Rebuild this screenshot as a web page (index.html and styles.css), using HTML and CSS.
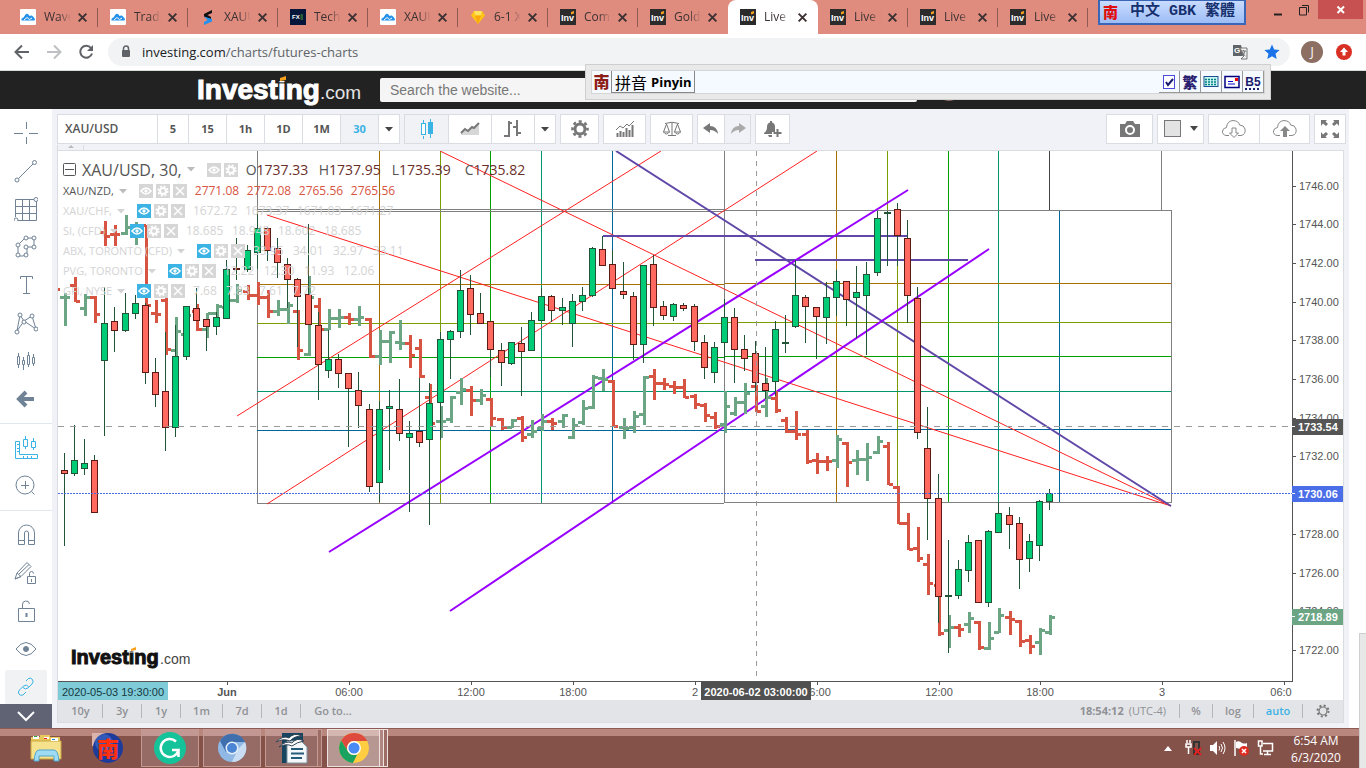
FILE: index.html
```html
<!DOCTYPE html>
<html lang="en">
<head>
<meta charset="utf-8">
<title>Live Futures Charts</title>
<link rel="stylesheet" href="styles.css">
</head>
<body>
<svg class="defs" aria-hidden="true">
  <symbol id="fav-wave" viewBox="0 0 16 16"><rect width="16" height="16" rx="1" fill="#fff"/><path d="M1.500 11.500Q1 9 3.500 8.500L5.500 5.500Q7 3.800 8.500 5.500L9.500 7L11 6.500Q12 6 13 7.500Q15.500 9.500 14.500 11.500Z" fill="#2491eb"/><path d="M4 11L7 8.500L9.500 10.500L12 9" stroke="#fff" fill="none"/></symbol>
  <symbol id="fav-s" viewBox="0 0 16 16"><path d="M12 1v3L7.500 6l3.500 2v3L4 7.500V5Z" fill="#111"/><path d="M4 7.500L12 10v2.500L4 16v-3l3.500-2Z" fill="#2491eb"/></symbol>
  <symbol id="fav-fx" viewBox="0 0 16 16"><rect width="16" height="16" fill="#06163a"/><text x="2" y="10" font-family="Liberation Sans" font-weight="700" font-size="6" fill="#fff">FX</text><path d="M10.500 6H13M10.500 8H13M10.500 10H13" stroke="#4ea52f"/></symbol>
  <symbol id="fav-gem" viewBox="0 0 16 16"><path d="M4 2h8l3 4.500L8 15L1 6.500Z" fill="#ffc414"/><path d="M4 2h8l-1 4.500H5Z" fill="#ffe35c"/><path d="M5 6.500h6L8 15Z" fill="#f9a90c"/></symbol>
  <symbol id="fav-inv" viewBox="0 0 16 16"><rect width="16" height="16" fill="#2b2b2b"/><text x="1" y="12" font-family="Liberation Sans" font-weight="700" font-size="9" fill="#fff">Inv</text><path d="M11 3l3 -1v2.500l-3 1Z" fill="#f7a01b"/></symbol>
  <symbol id="x" viewBox="0 0 10 10"><path d="M1.500 1.500L8.500 8.500M8.500 1.500L1.500 8.500" stroke="#3c3133" stroke-width="1.800"/></symbol>
  <symbol id="eye" viewBox="0 0 14 14"><rect width="14" height="14" fill="var(--bg)"/><path d="M2 7Q7 1 12 7Q7 13 2 7Z" fill="none" stroke="#fff" stroke-width="1.500"/><circle cx="7" cy="7" r="1.700" fill="#fff"/></symbol>
  <symbol id="cog" viewBox="0 0 14 14"><rect width="14" height="14" fill="#d6d6d6"/><circle cx="7" cy="7" r="3" fill="none" stroke="#fff" stroke-width="2"/><circle cx="7" cy="7" r="4.800" fill="none" stroke="#fff" stroke-width="1.500" stroke-dasharray="2 1.770"/></symbol>
  <symbol id="del" viewBox="0 0 14 14"><rect width="14" height="14" fill="#d6d6d6"/><path d="M3 3L11 11M11 3L3 11" stroke="#fff" stroke-width="1.500"/></symbol>
  <symbol id="gear" viewBox="0 0 20 20"><circle cx="10" cy="10" r="5" fill="none" stroke="currentColor" stroke-width="3"/><circle cx="10" cy="10" r="7.500" fill="none" stroke="currentColor" stroke-width="2.600" stroke-dasharray="3 2.890" stroke-dashoffset="1.500"/></symbol>
  <symbol id="caret" viewBox="0 0 8 5"><path d="M0 0H8L4 4.500Z" fill="currentColor"/></symbol>
</svg>

<header class="tabs">
  <nav class="tablist" aria-label="Tabs">
    <div class="tab"><svg class="fav"><use href="#fav-wave"/></svg><span>Wave</span><button aria-label="Close tab"><svg><use href="#x"/></svg></button></div>
    <div class="tab"><svg class="fav"><use href="#fav-wave"/></svg><span>Trade</span><button aria-label="Close tab"><svg><use href="#x"/></svg></button></div>
    <div class="tab"><svg class="fav"><use href="#fav-s"/></svg><span>XAUU</span><button aria-label="Close tab"><svg><use href="#x"/></svg></button></div>
    <div class="tab"><svg class="fav"><use href="#fav-fx"/></svg><span>Tech</span><button aria-label="Close tab"><svg><use href="#x"/></svg></button></div>
    <div class="tab"><svg class="fav"><use href="#fav-wave"/></svg><span>XAUU</span><button aria-label="Close tab"><svg><use href="#x"/></svg></button></div>
    <div class="tab"><svg class="fav"><use href="#fav-gem"/></svg><span>6-1 X</span><button aria-label="Close tab"><svg><use href="#x"/></svg></button></div>
    <div class="tab"><svg class="fav"><use href="#fav-inv"/></svg><span>Com</span><button aria-label="Close tab"><svg><use href="#x"/></svg></button></div>
    <div class="tab plain"><svg class="fav"><use href="#fav-inv"/></svg><span>Gold</span><button aria-label="Close tab"><svg><use href="#x"/></svg></button></div>
    <div class="tab active"><svg class="fav"><use href="#fav-inv"/></svg><span>Live F</span><button aria-label="Close tab"><svg><use href="#x"/></svg></button></div>
    <div class="tab"><svg class="fav"><use href="#fav-inv"/></svg><span>Live F</span><button aria-label="Close tab"><svg><use href="#x"/></svg></button></div>
    <div class="tab"><svg class="fav"><use href="#fav-inv"/></svg><span>Live F</span><button aria-label="Close tab"><svg><use href="#x"/></svg></button></div>
    <div class="tab"><svg class="fav"><use href="#fav-inv"/></svg><span>Live</span><button aria-label="Close tab"><svg><use href="#x"/></svg></button></div>
  </nav>
  <div class="ime-mode"><b class="nan">南</b><span>中文 GBK 繁體</span></div>
  <div class="win">
    <button aria-label="Minimize"><svg width="12" height="12"><path d="M2 10.500H10" stroke="#222" stroke-width="2"/></svg></button>
    <button aria-label="Restore"><svg width="12" height="12"><path d="M1.500 3.500H8.500V11H1.500ZM4 1.500H10.500V8.500" fill="none" stroke="#222"/></svg></button>
    <button class="shut" aria-label="Close window"><svg width="10" height="10"><path d="M1.500 1.500L8 8M8 1.500L1.500 8" stroke="#fff" stroke-width="2"/></svg></button>
  </div>
</header>

<div class="address">
  <button aria-label="Back"><svg width="16" height="16"><path d="M15 8H2M8 1.500L1.500 8L8 14.500" fill="none" stroke="#5f6368" stroke-width="2"/></svg></button>
  <button aria-label="Forward"><svg width="16" height="16"><path d="M1 8H14M8 1.500L14.500 8L8 14.500" fill="none" stroke="#bfc0c3" stroke-width="2"/></svg></button>
  <button aria-label="Reload"><svg width="16" height="16"><path d="M13 4A6 6 0 1 0 14 9.500" fill="none" stroke="#5f6368" stroke-width="2"/><path d="M15 1V7H9Z" fill="#5f6368"/></svg></button>
  <div class="omni">
    <svg width="10" height="14"><path d="M2.500 6V3.500a2.500 2.500 0 0 1 5 0V6" fill="none" stroke="#5f6368" stroke-width="1.500"/><rect x="1" y="5" width="8" height="7" rx="1" fill="#5f6368"/></svg>
    <span class="url"><b>investing.com</b>/charts/futures-charts</span>
    <svg width="16" height="16"><path d="M1 1h8l3 11H1Z" fill="#606468"/><path d="M8 4h7v11H9L12 12Z" fill="#f1f3f4" stroke="#777"/><text x="2" y="9" font-family="Liberation Sans" font-size="8" font-weight="700" fill="#fff">G</text><path d="M9 7h5M11.500 6v1M13 7q-1 4-3 5M10.500 8q1 3 3 4" stroke="#777" fill="none"/></svg>
    <svg width="16" height="16"><path d="M8 .5L10.200 5.500L15.600 6L11.500 9.700L12.700 15L8 12.200L3.300 15L4.500 9.700L.4 6L5.800 5.500Z" fill="#1a73e8"/></svg>
  </div>
  <span class="avatar">J</span>
  <svg class="upd" width="16" height="16"><circle cx="8" cy="8" r="8" fill="#d93025"/><path d="M8 3.500L12 8H9.500V11.500H6.500V8H4Z" fill="#fff"/></svg>
</div>

<div class="site">
  <svg class="brand" viewBox="0 0 168 38" width="168" height="38" role="img" aria-label="Investing.com"><text x="0" y="28" class="heavy" font-size="28" fill="#fff" stroke="#fff">Investing</text><text x="123" y="28" font-size="19" fill="#e4e4e4">.com</text><rect x="81" y="5" width="10" height="5" fill="#222"/><path d="M83 7L89 5V9L83 10Z" fill="#f7a01b"/></svg>
  <input class="search" type="text" aria-label="Search" placeholder="Search the website...">
  <span class="user"></span>
</div>

<div class="pinyin">
  <div class="strip">
    <b class="nan dark">南</b><span class="mode">拼音 <b>Pinyin</b></span>
    <span class="keys">
      <button aria-label="Enabled"><svg width="14" height="16"><rect x="1.500" y="1.500" width="11" height="13" fill="#fff" stroke="#4a4ae0"/><path d="M4 8L6 11L11 5" fill="none" stroke="#1b1b70" stroke-width="2"/></svg></button>
      <button class="fan" aria-label="Traditional">繁</button>
      <button aria-label="Keyboard"><svg width="16" height="14"><rect x="1" y="1.500" width="14" height="10" fill="#c8f4f4" stroke="#1a5090"/><path d="M2 4.500H14M2 7H14M2 9.500H14" stroke="#008080" stroke-width="1.500" stroke-dasharray="2 1"/></svg></button>
      <button aria-label="Mail"><svg width="16" height="14"><rect x="1" y="1.500" width="14" height="11" fill="#fff" stroke="#000080" stroke-width="1.500"/><path d="M4 6.500H9M4 9H11" stroke="#0000d0"/><rect x="11" y="3" width="3" height="3" fill="#f00000"/></svg></button>
      <button class="b5">B5</button>
    </span>
  </div>
</div>

<main class="work">
  <aside class="tools">
    <button aria-label="Cross"><svg viewBox="0 0 24 24"><path d="M0 12.500H9M15 12.500H24M12.500 1V8M12.500 16V23"/></svg></button>
    <button aria-label="Trend line"><svg viewBox="0 0 24 24"><path d="M4.500 19.500L19 5"/><circle cx="3" cy="21" r="2"/><circle cx="20.500" cy="3.500" r="2"/></svg></button>
    <button aria-label="Gann"><svg viewBox="0 0 24 24"><path d="M1.500 2.500H20M1.500 2.500V20M3 23.500H22.500V4M1 9.500H22M1 16.500H22M8.500 2V23M15.500 2V23"/><circle cx="22" cy="2.500" r="2" class="bg"/><circle cx="2" cy="23" r="2" class="bg"/></svg></button>
    <button aria-label="Elliott"><svg viewBox="0 0 24 24"><path d="M4 20V10L11 3H20V12H13V19L9 21H4"/><g class="dots"><circle cx="4" cy="20" r="2"/><circle cx="4" cy="10" r="2"/><circle cx="12" cy="3" r="2"/><circle cx="20" cy="3" r="2"/><circle cx="20" cy="12" r="2"/><circle cx="12" cy="12" r="2"/><circle cx="12" cy="20" r="2"/></g></svg></button>
    <button aria-label="Text"><svg viewBox="0 0 24 24"><path d="M6.500 6V3.500H18.500V6M12.500 3.500V20.500M9 20.500H16"/></svg></button>
    <button aria-label="Patterns"><svg viewBox="0 0 24 24"><path d="M3 20L6 4L10 10L18 5L22 18L10 10Z"/><g class="dots"><circle cx="3" cy="21" r="2"/><circle cx="6" cy="4" r="2"/><circle cx="10" cy="11" r="2"/><circle cx="18" cy="5" r="2"/><circle cx="22" cy="18" r="2"/></g></svg></button>
    <button aria-label="Forecast"><svg viewBox="0 0 24 24"><path d="M4.500 4V7M4.500 16V19M9.500 8V11M9.500 15V21M14.500 3V6M14.500 15V18M19.500 5V8M19.500 14V17"/><path d="M3.500 7.500h2v8h-2ZM8.500 11.500h2v4h-2ZM13.500 6.500h2v9h-2ZM18.500 8.500h2v6h-2Z"/></svg></button>
    <button aria-label="Back"><svg viewBox="0 0 24 24"><path d="M20 12H7M12 5L5 12L12 19" stroke-width="4"/></svg></button>
    <hr>
    <button class="blue" aria-label="Measure"><svg viewBox="0 0 24 24"><path d="M1.500 5.500H5.500V18.500H23.500V22.500H1.500ZM11.500 0V3M11.500 10V13M19.500 2V5M19.500 11V14M9.500 3.500h4v7h-4ZM17.500 5.500h4v6h-4ZM3 8.500H5M3 12.500H5M3 15.500H5M9.500 20V22M13.500 20V22M17.500 20V22"/></svg></button>
    <button aria-label="Zoom"><svg viewBox="0 0 24 24"><circle cx="11" cy="11" r="9"/><path d="M11.500 7V15M7 11.500H15M17.500 17.500L20.500 20.500"/></svg></button>
    <hr>
    <button aria-label="Magnet"><svg viewBox="0 0 24 24"><path d="M4.500 21.500V10A8 8 0 0 1 20.500 10V21.500H14.500V10A2 2 0 0 0 10.500 10V21.500ZM4 17.500H10M14 17.500H20"/></svg></button>
    <button aria-label="Drawing mode"><svg viewBox="0 0 24 24"><path d="M1 18L3 12L13 1.500L17 5.500L7 15.500ZM1 18L7 15.500M3 12L7 15.500M5 13L15 3.500M13.500 15.500h8v7h-8ZM15.500 15V12.500a2 2 0 0 1 4 0M17.500 18v3"/></svg></button>
    <button aria-label="Lock"><svg viewBox="0 0 24 24"><path d="M4.500 9.500H20.500V22.500H4.500ZM8.500 9V6a3.500 3.500 0 0 1 7 -1"/><path d="M12.500 14V18" stroke-width="2"/></svg></button>
    <button aria-label="Hide"><svg viewBox="0 0 24 24"><path d="M2 12Q12 -1 22 12Q12 25 2 12Z"/><circle cx="12" cy="12" r="2.500" class="fill"/></svg></button>
    <button class="blue chosen" aria-label="Link"><svg viewBox="0 0 24 24"><path d="M12 6L14.500 3.500Q17 2.500 18.500 4.500Q20 7 18 9L14 13Q11 15 9 12.500M12 17L9 20Q6 21 5 19Q3.500 17 5.500 15L9.500 11Q12.500 9 14.500 11.500"/></svg></button>
    <button class="more" aria-label="More"><svg width="20" height="12"><path d="M2 2L10 10L18 2" fill="none" stroke="#fff" stroke-width="2"/></svg></button>
  </aside>

  <section class="panel">
    <div class="bar">
      <div class="grp"><button class="sym">XAU/USD</button><button class="w1">5</button><button>15</button><button>1h</button><button>1D</button><button>1M</button><button class="on">30</button><button class="dd" aria-label="Intervals"><svg class="car"><use href="#caret"/></svg></button></div>
      <div class="grp tri"><button class="on" aria-label="Candles"><svg width="14" height="20"><path d="M3.500 1V4M3.500 17V20M10.500 0V19" stroke="#3bb3e4"/><rect x="1.500" y="4.500" width="4" height="11" fill="#fff" stroke="#3bb3e4"/><rect x="8" y="3" width="5" height="12" fill="#3bb3e4"/></svg></button><button aria-label="Area"><svg width="20" height="16"><path d="M1 12L5 8L8 10L12 6L14 7L19 2V14H1Z" fill="#d7d7d7"/><path d="M1 12L5 8L8 10L12 6L14 7L19 2" fill="none" stroke="#777" stroke-width="2"/></svg></button><button aria-label="Bars"><svg width="18" height="20"><path d="M5 2V18M0 17H5M5 4H8M13 1V17M9 8H13M13 14H17" stroke="#777" stroke-width="2"/></svg></button><button class="dd" aria-label="Styles"><svg class="car"><use href="#caret"/></svg></button></div>
      <div class="grp"><button class="w2" aria-label="Settings"><svg width="20" height="20"><use href="#gear"/></svg></button></div>
      <div class="grp ic"><button aria-label="Indicators"><svg width="20" height="18"><path d="M2.500 13V17M5.500 11V17M8.500 12V17M11.500 8V17M14.500 10V17M17.500 5V17" stroke="#777" stroke-width="2"/><path d="M1 10L5 6L8 8L12 4L14 6L19 1" fill="none" stroke="#777"/></svg></button></div>
      <div class="grp ic"><button aria-label="Compare"><svg width="20" height="18"><path d="M10 2V15M6 15.500H14M3 3.500Q10 1 17 3.500M4.500 4L1.500 12H7.500ZM15.500 4L12.500 12H18.500ZM1.500 12Q4.500 16 7.500 12M12.500 12Q15.500 16 18.500 12" fill="none" stroke="#777"/></svg></button></div>
      <div class="grp"><button class="w3" aria-label="Undo"><svg width="16" height="12"><path d="M0 5L7 0V3Q14 3 15 11Q12 7 7 7V10Z" fill="#777"/></svg></button><button class="w3 off" aria-label="Redo"><svg width="16" height="12"><path d="M16 5L9 0V3Q2 3 1 11Q4 7 9 7V10Z" fill="#aaa"/></svg></button></div>
      <div class="grp"><button class="w4" aria-label="Alert"><svg width="20" height="18"><path d="M1 13Q4 11 4 7Q4 3 7 2.500V1H9V2.500Q12 3 12 7V12H9V14H1ZM5 15h4v2H6Z" fill="#777"/><path d="M14.500 9V17M10.500 13H18.500" stroke="#777" stroke-width="2"/></svg></button></div>
      <div class="grp end"><button class="w5" aria-label="Snapshot"><svg width="20" height="16"><path d="M0 3H5L7 0H13L15 3H20V16H0Z" fill="#777"/><circle cx="10" cy="9" r="4" fill="none" stroke="#fff" stroke-width="2"/></svg></button></div>
      <div class="grp"><button class="w5" aria-label="Background"><svg width="34" height="18"><rect x=".5" y=".5" width="16" height="16" fill="#e3e3e3" stroke="#777"/><path d="M26 6H34L30 11Z" fill="#444"/></svg></button></div>
      <div class="grp"><button class="w6" aria-label="Load"><svg width="26" height="20"><path d="M8 16.500H5Q1 15.500 1.500 12Q2 9 5.500 8.500Q6 2 12 1.500Q18 2 18.500 6Q23 6 24 10Q25 15.500 20 16.500H17" fill="none" stroke="#888"/><path d="M11 9H15V14H17.500L13 18.500L8.500 14H11Z" fill="#fff" stroke="#888"/></svg></button><button class="w6" aria-label="Save"><svg width="26" height="20"><path d="M8 16.500H5Q1 15.500 1.500 12Q2 9 5.500 8.500Q6 2 12 1.500Q18 2 18.500 6Q23 6 24 10Q25 15.500 20 16.500H17" fill="none" stroke="#888"/><path d="M11 18H15V12H18L13 7L8 12H11Z" fill="#888"/></svg></button></div>
      <div class="grp"><button class="w7" aria-label="Full screen"><svg width="18" height="18"><path d="M0 0H6L4.500 1.500L7 4L5 6L2 3.500L0 6ZM18 0V6L16 3.500L13 6L11 4L13.500 1.500L12 0ZM0 18V12L2 14.500L5 12L7 14L4.500 16.500L6 18ZM18 18H12L13.500 16.500L11 14L13 12L16 14.500L18 12Z" fill="#777"/></svg></button></div>
    </div>
    <div class="fold"><span></span></div>
    <div class="chart">
      <svg class="plot" id="plot" viewBox="58 151 1285 549" role="img" aria-label="XAU/USD 30 minute chart"></svg>
      <div class="legend">
        <div class="row main"><svg class="min" width="13" height="13"><rect x=".5" y=".5" width="12" height="12" rx="1" fill="none" stroke="#555"/><path d="M2 6.500H11" stroke="#555"/></svg><span class="nm">XAU/USD, 30,</span><svg class="car"><use href="#caret"/></svg><svg class="b"><use href="#eye"/></svg><svg class="b"><use href="#cog"/></svg><span class="ohlc"><span>O<i>1737.33</i></span><span>H<i>1737.95</i></span><span>L<i>1735.39</i></span><span>C<i>1735.82</i></span></span></div>
        <div class="row nzd"><span class="nm">XAU/NZD,</span><svg class="car"><use href="#caret"/></svg><svg class="b"><use href="#eye"/></svg><svg class="b"><use href="#cog"/></svg><svg class="b"><use href="#del"/></svg><span class="vals v7"><i>2771.08</i><i>2772.08</i><i>2765.56</i><i>2765.56</i></span></div>
        <div class="row hid"><span class="nm">XAU/CHF,</span><svg class="car"><use href="#caret"/></svg><svg class="b"><use href="#eye"/></svg><svg class="b"><use href="#cog"/></svg><svg class="b"><use href="#del"/></svg><span class="vals v7"><i>1672.72</i><i>1673.37</i><i>1671.03</i><i>1671.27</i></span></div>
        <div class="row hid"><span class="nm">SI, (CFD)</span><svg class="car"><use href="#caret"/></svg><svg class="b"><use href="#eye"/></svg><svg class="b"><use href="#cog"/></svg><svg class="b"><use href="#del"/></svg><span class="vals v6"><i>18.685</i><i>18.948</i><i>18.602</i><i>18.685</i></span></div>
        <div class="row hid"><span class="nm">ABX, TORONTO (CFD)</span><svg class="car"><use href="#caret"/></svg><svg class="b"><use href="#eye"/></svg><svg class="b"><use href="#cog"/></svg><svg class="b"><use href="#del"/></svg><span class="vals v5"><i>33.95</i><i>34.01</i><i>32.97</i><i>33.11</i></span></div>
        <div class="row hid"><span class="nm">PVG, TORONTO</span><svg class="car"><use href="#caret"/></svg><svg class="b"><use href="#eye"/></svg><svg class="b"><use href="#cog"/></svg><svg class="b"><use href="#del"/></svg><span class="vals v5"><i>12.22</i><i>12.30</i><i>11.93</i><i>12.06</i></span></div>
        <div class="row hid"><span class="nm">GFI, NYSE</span><svg class="car"><use href="#caret"/></svg><svg class="b"><use href="#eye"/></svg><svg class="b"><use href="#cog"/></svg><svg class="b"><use href="#del"/></svg><span class="vals v4"><i>7.68</i><i>7.83</i><i>7.61</i><i>7.72</i></span></div>
      </div>
    </div>
    <div class="foot">
      <button>10y</button><button>3y</button><button>1y</button><button class="wide">1m</button><button>7d</button><button>1d</button><button class="goto">Go to...</button>
      <span class="time"><b>18:54:12</b> (UTC-4)</span><button class="pc">%</button><button class="lg">log</button><button class="au">auto</button><button class="pc" aria-label="Scale settings"><svg width="14" height="14" viewBox="0 0 14 14"><circle cx="7" cy="7" r="4" fill="none" stroke="#777" stroke-width="1.200"/><circle cx="7" cy="7" r="5.500" fill="none" stroke="#777" stroke-width="2" stroke-dasharray="2 2.320"/></svg></button>
    </div>
  </section>
  <div class="gutter"></div>
</main>

<footer class="task">
  <button class="app" aria-label="File Explorer"><svg width="34" height="32"><path d="M2 5h9v-2h10v2h10v22H2Z" fill="#e8c95c"/><path d="M2 9H32V27H2Z" fill="#f6e28d" stroke="#c9a640"/><path d="M4 4h6v3H4ZM15 5h5v2h-5ZM22 6h7v3h-7Z" fill="#fff"/><path d="M5 4h3v1H5Z" fill="#27a83a"/><path d="M15 6h3v1h-3Z" fill="#d22"/><path d="M23 7h3v1h-3Z" fill="#28c"/><path d="M5 29Q6 18 10 18H25Q29 18 30 29H25V24H10V29Z" fill="#9fdcf3" stroke="#4fa6cf"/></svg></button>
  <button class="app" aria-label="IME"><svg width="34" height="32"><path d="M1 1h13v13H1Z" fill="#d9b3ac"/><circle cx="17" cy="16" r="15" fill="#1d3b9a"/><circle cx="13" cy="11" r="9" fill="#3c66c8" opacity=".7"/><text x="6" y="25" font-family="Noto Sans CJK TC" font-weight="900" font-size="22" fill="#ff3010">南</text></svg></button>
  <button class="app run" aria-label="Grammarly"><svg width="32" height="32"><circle cx="16" cy="16" r="16" fill="#15c39a"/><path d="M22 9.500A9 9 0 1 0 24.500 18H18M24.500 18V25" fill="none" stroke="#fff" stroke-width="2.500"/></svg></button>
  <button class="app run" aria-label="Chromium"><svg width="30" height="30" viewBox="0 0 30 30"><circle cx="15" cy="15" r="14" fill="#8fb8e4"/><path d="M3 8A14 14 0 0 1 28 9H15L9 19Z" fill="#3f70ad"/><path d="M28 9A14 14 0 0 1 15 29L21 16Z" fill="#c9def2"/><circle cx="15" cy="15" r="6.500" fill="#e9f1fa"/><circle cx="15" cy="15" r="5" fill="#4a86d4"/></svg></button>
  <button class="app run stack" aria-label="Writer"><svg width="34" height="32"><path d="M7 1H28V31H7Z" fill="#17455f"/><path d="M12 9H26L32 15V31H12Z" fill="#f5f8fa" stroke="#7c95a3"/><path d="M16 17H28M16 21.500H29M16 26H27" stroke="#245b7a" stroke-width="2"/><path d="M1 10Q8 3 14 6Q19 0 27 4Q19 4 15 9Q8 6 1 10ZM4 15Q11 8 17 11Q22 5 29 9Q22 10 17 14Q11 11 4 15Z" fill="#fff" stroke="#345"/></svg></button>
  <button class="app run lit stack" aria-label="Chrome"><svg width="32" height="32" viewBox="0 0 30 30"><circle cx="15" cy="15" r="14" fill="#ffcd42"/><path d="M2.900 8A14 14 0 0 1 27.500 8.500H15A6.500 6.500 0 0 0 9.400 18.300Z" fill="#de4b3e"/><path d="M2.900 8L9.400 18.200A6.500 6.500 0 0 0 18 21L14 29A14 14 0 0 1 2.900 8Z" fill="#1aa260"/><circle cx="15" cy="15" r="6.500" fill="#fff"/><circle cx="15" cy="15" r="5.200" fill="#4a8af4"/></svg></button>
  <div class="tray">
    <svg width="8" height="5"><path d="M0 5L4 0L8 5Z" fill="#fff"/></svg>
    <svg width="18" height="18"><path d="M2 1V4M5 1V4M1 5H6V8H1ZM3.500 8V15" fill="none" stroke="#fff" stroke-width="1.500"/><path d="M9 3H14V15H9Z" fill="none" stroke="#333" stroke-width="2"/><path d="M9 9L16 16M16 9L9 16" stroke="#e02020" stroke-width="2"/></svg>
    <svg width="18" height="16"><path d="M1 5H4L8 1V15L4 11H1Z" fill="#fff"/><path d="M10 6Q11.500 8 10 10.500M12 4Q15 8 12 12M14 2Q18 8 14 14" fill="none" stroke="#fff"/></svg>
    <svg width="18" height="18"><path d="M2 1V17" stroke="#fff" stroke-width="1.500"/><path d="M3 3Q6 1 9 4Q12 5 14 4V9Q10 11 3 9Z" fill="#fff"/><circle cx="11" cy="12" r="5" fill="#df2c20"/><path d="M9 10L13 14M13 10L9 14" stroke="#fff" stroke-width="1.500"/></svg>
    <svg width="18" height="18"><path d="M6 4.500H15.500V12H6M10.500 12V15M7 15.500H14M3.500 7V15H6M1.500 2H5V7H1.500Z" fill="none" stroke="#fff" stroke-width="1.500"/></svg>
  </div>
  <div class="clock">6:54 AM<br>6/3/2020</div>
</footer>
<div class="peek"></div>
<script src="chart.js"></script>
</body>
</html>
```
FILE: styles.css
```css
* { box-sizing: border-box; }
body { margin: 0; min-height: 100vh; display: flex; flex-direction: column; position: relative; overflow: hidden; background: #fff; font: 12px/16px "Open Sans", "Noto Sans", "Noto Sans CJK TC", sans-serif; color: #444; }
button { border: 0; padding: 0; margin: 0; background: none; font: inherit; color: inherit; display: flex; align-items: center; justify-content: center; flex: none; }
svg { flex: none; display: block; }
.defs { display: none; }

.tabs { height: 34px; background: #df8c7e; display: flex; align-items: flex-start; padding: 0 3px 0 8px; }
.tablist { display: flex; height: 34px; flex: none; }
.tab { width: 90px; display: flex; align-items: center; padding: 0 10px 0 12px; position: relative; color: #3c3133; }
.tab:not(.plain):not(.active)::after { content: ""; position: absolute; right: 0; top: 8px; height: 19px; border-right: 1px solid #8e5a52; }
.tab span { width: 27px; margin: 0 6px 0 8px; overflow: hidden; white-space: nowrap; font-size: 12px; mask-image: linear-gradient(90deg, #000 55%, transparent); }
.tab .fav { width: 16px; height: 16px; }
.tab button svg { width: 11px; height: 11px; }
.tab.active { background: #fff; border-radius: 8px 8px 0 0; }
.ime-mode { margin-left: 10px; width: 148px; height: 25px; border: 2px solid #3a66b8; border-top-width: 1px; background: linear-gradient(#c9dcff, #9dbdf6); display: flex; align-items: center; gap: 12px; padding-left: 3px; color: #16306e; font: 700 15px/20px "Liberation Mono", "Noto Sans CJK TC", monospace; white-space: nowrap; overflow: hidden; }
.nan { color: #e01010; font-family: "Noto Sans CJK TC", sans-serif; font-weight: 900; }
.win { margin-left: auto; display: flex; }
.win button { width: 26px; height: 19px; }
.win .shut { width: 45px; background: #c75050; margin-left: 1px; }

.address { height: 37px; display: flex; align-items: center; padding: 0 14px; background: #fff; border-bottom: 1px solid #d5dbd9; }
.address > button { width: 16px; margin-right: 16px; }
.omni { flex: 1; height: 28px; margin-left: -2px; border-radius: 14px; background: #f1f3f4; display: flex; align-items: center; padding: 0 10px 0 13px; gap: 16px; }
.omni .url { flex: 1; margin-left: -5px; font-size: 13px; color: #5f6368; }
.omni .url b { font-weight: 400; color: #202124; }
.avatar { width: 22px; height: 22px; margin: 0 13px 0 11px; border-radius: 50%; background: #8d6e63; color: #fff; text-align: center; line-height: 22px; }

.site { height: 38px; background: #222; display: flex; align-items: center; padding-left: 197px; }
.brand text { font-family: "Liberation Sans", sans-serif; }
.heavy { font-weight: 700; stroke-width: 1px; }
.search { width: 537px; height: 24px; margin-left: 15px; border: 0; border-radius: 2px; background: #f5f5f5; padding: 0 10px; font: 14px/24px "Liberation Sans", sans-serif; }
.search::placeholder { color: #777; }
.user { width: 22px; height: 22px; border-radius: 50%; margin-left: 21px; background: #8d6e63; }

.pinyin { position: absolute; left: 585px; top: 64px; width: 686px; height: 36px; border: 1px solid #cfcfcf; background: #e9e9e9; padding: 5px; }
.strip { height: 24px; display: flex; background: #f4faff; border: 1px solid #d5d5d5; }
.strip .nan { width: 20px; font-size: 16px; line-height: 20px; text-align: center; border-right: 1px solid #888; color: #8e1f18; }
.mode { display: flex; align-items: center; gap: 4px; padding: 0 2px 0 3px; border-right: 1px solid #888; border-bottom: 1px solid #888; color: #000; font: 16px/20px "Noto Sans CJK SC", sans-serif; white-space: nowrap; }
.mode b { font: 700 13px/20px "Open Sans", sans-serif; }
.keys { margin-left: auto; display: flex; }
.keys button { width: 21px; border-right: 1px solid #999; border-bottom: 1px solid #999; }
.keys .fan { font: 900 15px/20px "Noto Sans CJK TC", sans-serif; color: #2b2070; }
.keys .b5 { font: 700 12px/14px "Liberation Sans", sans-serif; color: #1c1c6c; text-decoration: underline dotted 2px; text-underline-offset: 3px; }

.work { flex: 1; display: flex; min-height: 0; background: #f0f2f7; }
.tools { width: 52px; background: #fff; display: flex; flex-direction: column; padding-top: 5px; }
.tools button { height: 38px; }
.tools svg { width: 24px; height: 24px; fill: none; stroke: #6f8296; stroke-width: 1; }
.tools .dots circle, .tools .bg { fill: #fff; }
.tools .fill { fill: #6f8296; }
.tools .blue svg { stroke: #3bb3e4; }
.tools hr { width: 100%; height: 1px; margin: 5px 0; border: 0; background: #dfe8ef; }
.tools .chosen { height: 34px; margin: 2px 5px 0; background: #f0f2f4; border-radius: 2px; }
.tools .more { height: 24px; background: #5f6374; margin-top: auto; }
.tools .more svg { width: 20px; height: 12px; }

.panel { flex: 1; min-width: 0; display: flex; flex-direction: column; padding: 5px; }
.bar { display: flex; gap: 4px; height: 30px; margin-right: -2px; }
.grp { display: flex; border: 1px solid #d9dce1; background: #fff; color: #555; font: 700 11px/28px "Open Sans", sans-serif; }
.grp button { width: 38px; }
.grp button + button { border-left: 1px solid #d9dce1; }
.grp.end { margin-left: auto; }
.grp .sym { width: 99px; justify-content: flex-start; padding-left: 7px; font-size: 12px; font-weight: 600; }
.grp .w1 { width: 31px; }
.grp.tri button { width: 43px; }
.grp .dd, .grp.tri .dd { width: 21px; }
.grp .on { background: #f0f2f5; color: #3bb3e4; }
.grp .off { background: #f0f2f7; }
.grp .w2 { width: 37px; color: #777; }
.grp .w3 { width: 26px; }
.grp .w4 { width: 33px; }
.grp .w5 { width: 45px; }
.grp .w6 { width: 50px; }
.grp .w7 { width: 30px; }
.grp.ic button { width: 41px; }
.car { width: 8px; height: 5px; color: #444; }
.fold { height: 6px; }
.fold span { display: block; width: 27px; height: 6px; border: 1px solid #d9dce1; border-top: 0; background: #f0f2f7; }
.fold span::after { content: ""; display: block; width: 0; margin: 1px auto; border: 3px solid transparent; border-top: 0; border-bottom-color: #bbb; }
.chart { flex: 1; min-height: 0; position: relative; background: #fff; border: 1px solid #d9dce1; border-bottom: 0; }
.plot { position: absolute; inset: 0; width: 100%; height: 100%; }
.plot text { font: 11px "Liberation Sans", sans-serif; fill: #555; }
.plot .jun { font-weight: 700; }
.plot .tag { fill: #fff; font-weight: 700; }
.plot .day { fill: #16383f; }
.plot .brand-a { font-size: 20px; font-weight: 700; fill: #111; stroke: #111; stroke-width: 1px; }
.plot .brand-b { font-size: 14px; fill: #444; }

.legend { position: absolute; left: 5px; top: 7px; }
.row { --bg: #d6d6d6; display: flex; align-items: center; height: 20px; font-size: 11px; line-height: 20px; color: #555; white-space: nowrap; }
.row i { font-style: normal; }
.row .b { width: 14px; height: 14px; margin-right: 3px; }
.row .car { margin: 0 12px 0 5px; color: #bbb; }
.row.main { font-size: 16px; height: 23px; }
.main .nm { margin-left: 6px; }
.ohlc { display: flex; margin-left: 5px; font-size: 14px; }
.ohlc span { width: 73px; }
.ohlc i { color: #6b2f2b; }
.nzd .vals { color: #d75442; }
.hid { --bg: #3bb3e4; color: #d4d4d4; }
.hid .car { color: #d4d4d4; }
.vals { display: flex; margin-left: 5px; font-size: 12px; }
.v7 i { width: 52px; }
.v6 i { width: 46px; }
.v5 i { width: 40px; }
.v4 i { width: 33px; }

.foot { height: 23px; background: #e3e4e7; display: flex; align-items: center; padding-left: 1px; color: #8f9196; font: 600 11px/16px "Open Sans", sans-serif; border: 1px solid #d9dce1; border-top: 0; }
.foot button { width: 39px; height: 14px; position: relative; border-right: 1px solid #b4b6ba; }
.foot button:first-child { width: 44px; }
.foot .wide { width: 42px; }
.foot .goto { width: 64px; border: 0; }
.foot .time { display: flex; gap: 5px; margin-left: auto; padding-right: 13px; border-right: 1px solid #b4b6ba; line-height: 14px; font-weight: 400; }
.foot .pc { width: 33px; }
.foot .lg { width: 41px; }
.foot .au { width: 49px; color: #3bb3e4; }
.foot button:last-child { width: 40px; border: 0; }
.gutter { width: 17px; background: #fff; }

.task { height: 40px; display: flex; align-items: center; padding: 0 19px 0 15px; background: linear-gradient(#8d5b54 0 1px, #ba877f 1px 8px, #85524a 8px); color: #fff; }
.app { width: 62px; height: 38px; }
.app.run { width: 58px; margin: 0 2px; border: 1px solid #c39b94; background: #ffffff26; }
.app.stack { width: 53px; margin-right: 7px; box-shadow: 4px 0 0 -1px #9c6c65, 4px 0 0 0 #c39b94; }
.app.lit { background: #ffffff66; border-color: #f0e2e0; box-shadow: 4px 0 0 -1px #b08680, 4px 0 0 0 #f0e2e0, 8px 0 0 -1px #9c6c65, 8px 0 0 0 #f0e2e0; }
.tray { margin-left: auto; display: flex; align-items: center; gap: 6px; }
.tray svg:first-child { margin-right: 7px; }
.clock { width: 62px; margin-left: 10px; text-align: center; font-size: 12px; line-height: 17px; padding-top: 2px; }
.peek { position: absolute; right: 0; bottom: 0; width: 7px; height: 135px; background: #e8e8e8; border: 1px solid #cfcfcf; border-right: 0; border-bottom: 0; }
```
FILE: chart.js
```javascript
var out = [];
var line = function (x1, y1, x2, y2, color, w, extra) {
  out.push('<line x1="' + x1 + '" y1="' + y1 + '" x2="' + x2 + '" y2="' + y2 + '" stroke="' + color + '" stroke-width="' + (w || 1) + '" ' + (extra || '') + '/>');
};
var rect = function (x, y, w, h, fill, stroke) {
  out.push('<rect x="' + x + '" y="' + y + '" width="' + w + '" height="' + h + '" fill="' + fill + '"' + (stroke ? ' stroke="' + stroke + '"' : '') + '/>');
};
var text = function (x, y, s, cls, anchor) {
  out.push('<text x="' + x + '" y="' + y + '" class="' + (cls || '') + '" text-anchor="' + (anchor || 'start') + '">' + s + '</text>');
};

// watermark
text(71, 664, 'Investing', 'brand-a');
text(160, 664, '.com', 'brand-b');
rect(129, 647, 7, 4, '#fff');
out.push('<path d="M131 649L136 647V650L131 651Z" fill="#f7a01b"/>');

// Gann grids
var gray = '#808080', brown = '#a87000', olive = '#789e00', green = '#00a000', teal = '#00966e', blue = '#006699';
[[257.5, gray], [379.5, brown], [440.5, olive], [490.5, green], [541.5, teal], [612.5, blue], [724.5, gray]].forEach(function (v) { line(v[0], 151, v[0], 503, v[1]); });
[[209.5, gray], [211.5, gray], [284.5, brown], [323.5, olive], [357.5, green], [391.5, teal], [430.5, blue], [503.5, gray]].forEach(function (h) { line(257, h[0], 724, h[0], h[1]); });
[[836.5, brown], [887.5, olive], [948.5, green], [998.5, teal], [1049.5, '#444'], [1161.5, gray]].forEach(function (v) { line(v[0], 151, v[0], 210, v[1]); });
[[836.5, brown], [897.5, olive], [948.5, green], [998.5, teal], [1059.5, blue], [1171.5, gray]].forEach(function (v) { line(v[0], 210, v[0], 503, v[1]); });
[[210.5, gray], [283.5, brown], [322.5, olive], [356.5, green], [391.5, teal], [429.5, blue], [502.5, gray]].forEach(function (h) { line(725, h[0], 1171, h[0], h[1]); });

// trend lines
line(237, 416, 661, 151, '#ff2020');
line(267, 504, 817, 151, '#ff2020');
line(267, 215, 1171, 506, '#ff2020');
line(440, 151, 1171, 506, '#ff2020');
line(616, 151, 1171, 506, '#6048a8', 2);
line(603, 236, 907, 236, '#6048a8', 2);
line(755, 260, 968, 260, '#6048a8', 2);
line(329, 552, 908, 190, '#9900ff', 2);
line(450, 611, 989, 249, '#9900ff', 2);

// bars: x, open, close, high, low, direction
var bars = [
[65,297,297,293,326,1],[75,285,301,277,302,0],[85,308,297,294,316,1],[95,297,314,296,323,0],[105,232,236,221,246,0],[115,234,234,225,246,0],[126,233,227,215,235,1],[136,228,230,222,245,1],[146,225,305,225,306,0],[156,313,314,300,323,0],[166,300,349,286,355,0],[176,350,331,317,356,1],[186,334,315,306,356,1],[197,311,329,304,331,0],[207,329,313,313,338,1],[217,313,306,304,325,1],[227,307,300,295,315,1],[237,300,290,284,303,1],[248,291,295,285,300,0],[258,295,297,282,305,0],[268,297,311,290,318,0],[278,311,309,300,316,1],[288,309,305,302,324,1],[298,311,350,310,360,0],[309,354,297,276,356,1],[319,306,329,298,329,0],[329,329,318,309,330,1],[339,318,317,309,328,1],[349,317,319,313,325,0],[359,319,317,306,326,1],[370,319,356,318,358,0],[380,356,341,330,365,1],[390,341,332,331,363,1],[400,342,343,320,350,1],[410,343,355,335,368,0],[420,348,376,339,378,0],[430,397,423,384,424,0],[441,421,421,406,438,1],[451,419,397,396,423,1],[461,392,389,378,405,1],[471,390,400,386,416,0],[481,400,395,389,405,1],[491,399,418,398,427,0],[502,419,427,418,430,0],[512,427,420,419,428,1],[522,418,437,416,442,0],[532,434,431,420,438,1],[542,428,421,414,431,1],[552,421,423,418,430,0],[563,421,415,414,428,1],[573,437,425,418,439,1],[583,422,408,400,425,1],[593,407,377,375,409,1],[603,378,379,369,391,1],[613,381,426,380,427,0],[624,427,428,418,439,1],[634,427,416,411,433,1],[644,414,377,376,425,1],[654,376,383,369,400,0],[664,383,384,378,390,0],[674,386,387,381,394,0],[684,387,397,379,398,0],[695,396,404,394,409,0],[705,405,415,403,422,0],[715,417,426,412,429,0],[725,424,406,391,433,1],[735,413,402,397,416,1],[745,402,393,383,414,1],[756,386,411,385,412,0],[766,406,397,378,417,1],[776,398,410,391,413,0],[786,420,431,417,433,0],[796,431,434,411,440,0],[807,434,461,430,464,0],[817,460,461,453,474,0],[827,461,461,456,471,0],[837,460,439,435,468,1],[847,443,462,442,487,0],[857,460,459,450,475,1],[867,459,457,443,481,1],[878,452,441,436,454,1],[888,446,484,442,485,0],[898,487,523,486,524,0],[908,523,549,513,550,0],[918,548,558,527,562,0],[928,564,583,554,595,0],[939,585,633,585,636,0],[949,630,627,615,648,1],[959,627,629,624,637,0],[969,624,618,612,633,1],[979,622,647,621,650,0],[989,648,638,622,650,1],[999,632,615,608,633,1],[1010,617,619,611,635,0],[1020,621,641,620,647,0],[1030,640,646,635,654,0],[1040,642,630,628,655,1],[1050,632,617,615,635,1]];
rect(58, 288, 2, 3, '#d75442');
bars.forEach(function (b) {
  var c = b[5] ? '#6ba583' : '#d75442';
  rect(b[0] - 1, b[3], 3, b[4] - b[3], c);
  rect(b[0] - 5, b[1] - 1, 5, 3, c);
  rect(b[0] + 1, b[2] - 1, 4, 3, c);
});

// candles: x, high, low, body top, body bottom, direction
var candles = [
[64,453,546,470,474,0],[74,425,476,460,474,1],[84,439,475,463,469,1],[94,455,513,460,513,0],[104,287,436,323,361,1],[114,307,352,321,331,0],[125,293,332,313,331,1],[135,295,319,303,314,1],[145,303,384,305,373,0],[155,358,407,372,395,0],[165,332,451,391,428,0],[175,325,437,356,428,1],[186,306,360,306,357,1],[196,288,321,308,321,0],[206,319,351,319,327,0],[216,312,335,317,327,1],[226,260,319,269,319,1],[236,238,280,268,270,0],[247,245,272,250,270,1],[257,212,269,228,253,1],[267,227,261,228,251,0],[277,238,278,248,263,0],[287,258,308,264,280,0],[297,278,347,279,297,0],[308,224,325,294,325,0],[318,312,400,325,365,0],[328,330,378,359,371,1],[338,354,388,359,374,0],[348,373,447,373,389,0],[358,372,428,390,406,0],[369,404,492,409,487,0],[379,401,502,409,483,1],[389,390,470,406,409,1],[399,379,441,409,434,0],[409,421,512,433,438,1],[419,378,447,431,443,0],[429,383,525,403,440,1],[440,332,440,339,403,1],[450,330,379,331,340,1],[460,270,338,290,332,1],[470,275,335,288,315,0],[480,293,324,313,324,0],[490,321,377,321,350,0],[501,343,386,350,363,0],[511,342,365,342,364,1],[521,327,396,343,352,0],[531,312,351,320,351,1],[541,288,321,296,321,1],[551,295,322,296,311,0],[562,298,325,307,311,1],[572,294,347,301,324,1],[582,287,311,295,302,1],[592,247,297,248,296,1],[602,236,266,249,266,0],[612,250,289,264,289,0],[623,262,299,291,295,0],[633,292,360,296,345,0],[643,265,363,265,345,1],[653,255,326,264,308,0],[663,301,320,306,316,0],[673,303,321,304,317,1],[683,303,311,305,309,0],[694,304,351,306,342,0],[704,335,379,342,368,0],[714,342,383,347,373,1],[724,299,360,317,343,1],[734,308,383,317,350,0],[744,335,371,349,359,0],[755,341,391,353,383,0],[765,347,399,383,391,0],[775,321,396,329,382,1],[785,315,353,342,344,1],[795,260,328,295,327,1],[805,295,343,297,307,0],[816,307,359,307,317,0],[826,282,344,297,318,1],[836,270,316,281,298,1],[846,281,326,281,300,0],[856,266,338,292,298,1],[866,262,355,274,296,1],[877,211,276,218,273,1],[887,211,266,212,214,1],[897,203,266,209,236,0],[907,220,323,238,296,0],[917,287,439,298,433,0],[927,407,540,448,499,0],[938,474,623,498,597,0],[948,540,653,595,597,1],[958,560,599,569,596,1],[968,535,582,542,571,1],[978,540,603,540,603,0],[988,530,607,531,603,1],[998,502,533,513,533,1],[1009,507,549,515,525,0],[1019,517,589,523,560,0],[1029,534,572,541,559,1],[1039,500,561,501,546,1],[1049,489,510,493,502,1]];
candles.forEach(function (c) {
  var edge = c[5] ? '#225437' : '#5b1a13';
  rect(c[0], c[1], 1, c[2] - c[1], '#225437');
  rect(c[0] - 2.5, c[3] + 0.5, 6, c[4] - c[3] - 1, c[5] ? '#00cc77' : '#ff6960', edge);
});

// crosshair and last price
line(58, 426.5, 1292, 426.5, '#999', 1, 'stroke-dasharray="6 6"');
line(756.5, 151, 756.5, 681, '#999', 1, 'stroke-dasharray="5 5"');
line(58, 493.5, 1292, 493.5, '#4a6ee0', 1, 'stroke-dasharray="2 1"');

// price axis
rect(1292, 151, 1, 531, '#555');
rect(58, 681, 1235, 1, '#555');
for (var i = 0; i < 13; i++) {
  var y = Math.round(185.5 + i * 38.7);
  rect(1293, y, 3, 1, '#555');
  if (i !== 8) text(1299, y + 4, (1746 - 2 * i) + '.00');
}
[[426, '#555', '1733.54'], [493, '#4a6ee8', '1730.06'], [616, '#6ba583', '2718.89']].forEach(function (p) {
  rect(1292, p[0] - 7, 51, 16, p[1]);
  rect(1292, p[0], 3, 1, '#fff');
  text(1298, p[0] + 5, p[2], 'tag');
});

// time axis
[[227, 'Jun'], [349, '06:00'], [471, '12:00'], [573, '18:00'], [695, '2'], [817, '06:00'], [939, '12:00'], [1040, '18:00'], [1162, '3'], [1284, '06:0']].forEach(function (t) {
  rect(t[0], 682, 1, 3, '#555');
  text(t[1] === '06:0' ? 1281 : t[0], 696, t[1], t[1] === 'Jun' ? 'jun' : '', 'middle');
});
rect(58, 682, 110, 18, '#80cbd8');
text(113, 696, '2020-05-03 19:30:00', 'day', 'middle');
rect(701, 682, 110, 18, '#505050');
text(756, 696, '2020-06-02 03:00:00', 'tag', 'middle');

document.getElementById('plot').innerHTML = out.join('');
```
